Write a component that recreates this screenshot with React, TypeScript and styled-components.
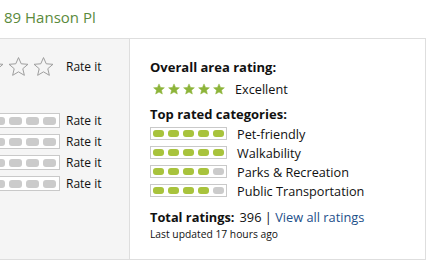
import React from "react"
import styled, { createGlobalStyle } from "styled-components"

const GlobalStyle = createGlobalStyle`
  html, body {
    margin: 0;
    padding: 0;
    background: #ffffff;
    font-family: "Open Sans", "Liberation Sans", sans-serif;
    color: #111;
  }
`

const Page = styled.div`
  width: 436px;
  height: 265px;
  overflow: hidden;
`

const Title = styled.h1`
  margin: 0;
  height: 38px;
  padding: 7px 0 0 4px;
  box-sizing: border-box;
  font-size: 15px;
  line-height: 20px;
  font-weight: 400;
  color: #5a8a3c;
`

const Box = styled.div`
  display: flex;
  width: 426px;
  height: 222px;
  box-sizing: border-box;
  border: 1px solid #dedede;
  border-left: none;
`

const LeftPanel = styled.div`
  width: 130px;
  flex-shrink: 0;
  box-sizing: border-box;
  background: #f5f5f5;
  border-right: 1px solid #dedede;
  overflow: hidden;
  display: flex;
  flex-direction: column;
  align-items: flex-end;
  padding-top: 17px;
  gap: 6px;
`

const RateRow = styled.div<{ $mb?: number }>`
  display: flex;
  align-items: center;
  gap: 6px;
  margin-bottom: ${(p) => p.$mb ?? 0}px;
`

const RateLabel = styled.span`
  width: 63px;
  font-size: 12px;
  line-height: 15px;
  white-space: nowrap;
`

const Stars = styled.div<{ $gap: number }>`
  display: flex;
  gap: ${(p) => p.$gap}px;
  flex-shrink: 0;
`

const Meter = styled.div<{ $pad: string; $gap: number }>`
  display: flex;
  flex-shrink: 0;
  gap: ${(p) => p.$gap}px;
  padding: ${(p) => p.$pad};
  border: 1px solid #c9c9c9;
  background: #ffffff;
`

const Pill = styled.span<{ $w: number; $h: number; $on: boolean }>`
  display: block;
  width: ${(p) => p.$w}px;
  height: ${(p) => p.$h}px;
  border-radius: 3px;
  background: ${(p) => (p.$on ? "#a8c33c" : "#cbcbcb")};
`

const RightPanel = styled.div`
  flex: 1;
  padding: 19px 0 0 20px;
  display: flex;
  flex-direction: column;
`

const Heading = styled.div<{ $mt?: number }>`
  font-size: 13px;
  line-height: 18px;
  font-weight: 700;
  margin-top: ${(p) => p.$mt ?? 0}px;
`

const ScoreRow = styled.div`
  display: flex;
  align-items: center;
  margin-top: 4px;
  height: 18px;
  gap: 10px;
  padding-left: 3px;
`

const Text = styled.span`
  font-size: 12.7px;
  line-height: 18px;
  white-space: nowrap;
`

const CategoryList = styled.div`
  display: flex;
  flex-direction: column;
  margin-top: 1px;
`

const CategoryRow = styled.div`
  display: flex;
  align-items: center;
  height: 19px;
  gap: 10px;
`

const Totals = styled.div`
  margin-top: 8px;
  font-size: 12.8px;
  line-height: 18px;
  display: flex;
  gap: 5px;
  white-space: nowrap;
`

const Bold = styled.span`
  font-weight: 700;
`

const Link = styled.a`
  color: #1d4f8a;
  text-decoration: none;
`

const Updated = styled.div`
  font-size: 10.3px;
  line-height: 14px;
  margin-top: 1px;
  white-space: nowrap;
`

const Star = ({ size, filled }: { size: number; filled: boolean }) => (
  <svg width={size} height={size} viewBox="0 0 24 24">
    <path
      d="M12 1.8l3.1 7.1 7.7.6-5.9 5 1.8 7.6L12 18.1l-6.7 4 1.8-7.6-5.9-5 7.7-.6z"
      fill={filled ? "#8db43a" : "none"}
      stroke={filled ? "#8db43a" : "#9a9a9a"}
      strokeWidth={filled ? 1 : 1.1}
      strokeLinejoin="miter"
    />
  </svg>
)

const RatingMeter = ({
  value,
  small,
}: {
  value: number
  small?: boolean
}) => (
  <Meter $pad={small ? "2px" : "3px 3px 2px"} $gap={4}>
    {[0, 1, 2, 3, 4].map((i) => (
      <Pill
        key={i}
        $w={small ? 11 : 13}
        $h={small ? 7 : 8}
        $on={i < value}
      />
    ))}
  </Meter>
)

const categories = [
  { name: "Pet-friendly", value: 5 },
  { name: "Walkability", value: 5 },
  { name: "Parks & Recreation", value: 4 },
  { name: "Public Transportation", value: 4 },
]

export default function App() {
  return (
    <Page>
      <GlobalStyle />
      <Title>89 Hanson Pl</Title>
      <Box>
        <LeftPanel>
          <RateRow $mb={30}>
            <Stars $gap={4}>
              {[0, 1, 2, 3, 4].map((i) => (
                <Star key={i} size={21} filled={false} />
              ))}
            </Stars>
            <RateLabel style={{ marginLeft: 6 }}>Rate it</RateLabel>
          </RateRow>
          {[0, 1, 2, 3].map((i) => (
            <RateRow key={i}>
              <RatingMeter value={0} />
              <RateLabel>Rate it</RateLabel>
            </RateRow>
          ))}
        </LeftPanel>
        <RightPanel>
          <Heading>Overall area rating:</Heading>
          <ScoreRow>
            <Stars $gap={3}>
              {[0, 1, 2, 3, 4].map((i) => (
                <Star key={i} size={12} filled />
              ))}
            </Stars>
            <Text>Excellent</Text>
          </ScoreRow>
          <Heading $mt={7}>Top rated categories:</Heading>
          <CategoryList>
            {categories.map((c) => (
              <CategoryRow key={c.name}>
                <RatingMeter value={c.value} small />
                <Text>{c.name}</Text>
              </CategoryRow>
            ))}
          </CategoryList>
          <Totals>
            <Bold>Total ratings:</Bold>
            <span>
              396 | <Link href="#">View all ratings</Link>
            </span>
          </Totals>
          <Updated>Last updated 17 hours ago</Updated>
        </RightPanel>
      </Box>
    </Page>
  )
}
